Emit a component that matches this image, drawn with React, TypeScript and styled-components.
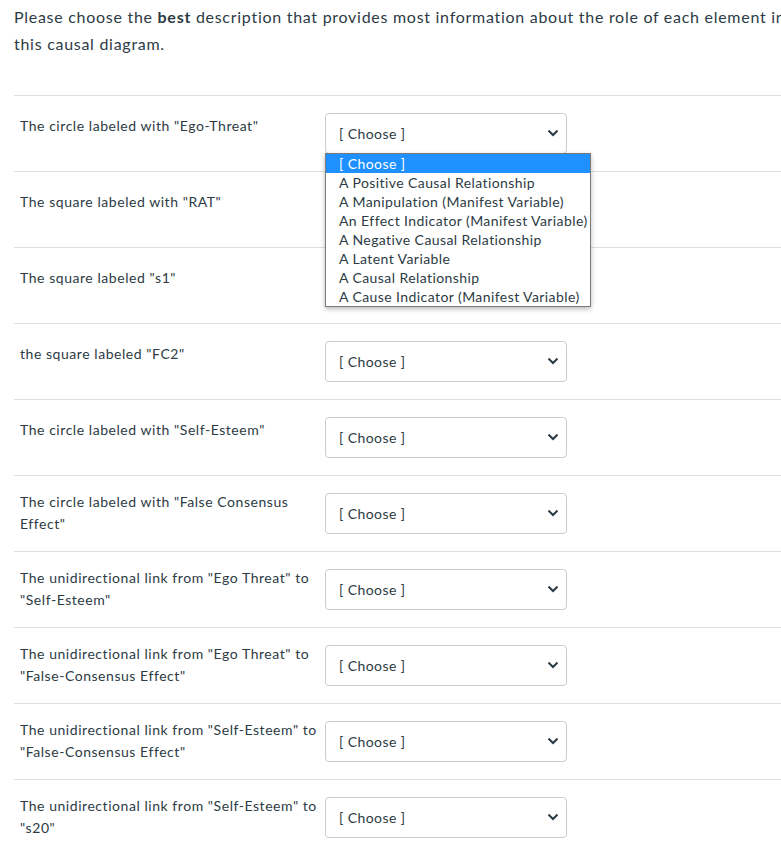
import React from "react";
import styled, { createGlobalStyle } from "styled-components";

const GlobalStyle = createGlobalStyle`
  html, body {
    margin: 0;
    padding: 0;
    background: #ffffff;
    overflow: hidden;
  }
  body {
    font-family: Lato, "Open Sans", "Liberation Sans", sans-serif;
    color: #2d3b45;
  }
`;

const Page = styled.div`
  width: 790px;
  padding-left: 14px;
`;

const Intro = styled.p`
  margin: 0 0 38px 0;
  padding-top: 3px;
  font-size: 16px;
  line-height: 27px;
  letter-spacing: 0.72px;
  color: #2d3b45;
`;

const List = styled.div`
  display: flex;
  flex-direction: column;
`;

const Row = styled.div`
  display: flex;
  align-items: flex-start;
  box-sizing: border-box;
  height: 76px;
  border-top: 1px solid #dcdedf;
`;

const Label = styled.div<{ $multi?: boolean }>`
  box-sizing: border-box;
  width: 311px;
  padding: ${(p) => (p.$multi ? "15px" : "19px")} 5px 0 6px;
  font-size: 14px;
  line-height: 22px;
  letter-spacing: 0.55px;
  color: #2d3b45;
`;

const SelectWrap = styled.div`
  position: relative;
  margin-top: 17px;
`;

const SelectBox = styled.div`
  box-sizing: border-box;
  width: 242px;
  height: 41px;
  display: flex;
  align-items: center;
  justify-content: space-between;
  padding: 0 8px 1px 13px;
  border: 1px solid #c7cdd1;
  border-radius: 4px;
  background: #ffffff;
  font-size: 14px;
  letter-spacing: 0.42px;
  color: #2d3b45;
`;

const Chevron = styled.svg`
  display: block;
  width: 10px;
  height: 7px;
`;

const Dropdown = styled.ul`
  position: absolute;
  top: 40px;
  left: 0;
  z-index: 2;
  margin: 0;
  padding: 0;
  list-style: none;
  box-sizing: border-box;
  width: 266px;
  background: #ffffff;
  border: 1px solid #7a7a7a;
  box-shadow: 0 2px 5px rgba(0, 0, 0, 0.28);
`;

const Option = styled.li<{ $active?: boolean }>`
  height: 19px;
  line-height: 19px;
  padding-left: 13px;
  font-size: 14px;
  letter-spacing: 0.42px;
  white-space: nowrap;
  background: ${(p) => (p.$active ? "#1e90ff" : "transparent")};
  color: ${(p) => (p.$active ? "#ffffff" : "#2d3b45")};
`;

const options = [
  "[ Choose ]",
  "A Positive Causal Relationship",
  "A Manipulation (Manifest Variable)",
  "An Effect Indicator (Manifest Variable)",
  "A Negative Causal Relationship",
  "A Latent Variable",
  "A Causal Relationship",
  "A Cause Indicator (Manifest Variable)",
];

const rows: { text: string; multi?: boolean; open?: boolean }[] = [
  { text: 'The circle labeled with "Ego-Threat"', open: true },
  { text: 'The square labeled with "RAT"' },
  { text: 'The square labeled "s1"' },
  { text: 'the square labeled "FC2"' },
  { text: 'The circle labeled with "Self-Esteem"' },
  { text: 'The circle labeled with "False Consensus Effect"', multi: true },
  { text: 'The unidirectional link from "Ego Threat" to "Self-Esteem"', multi: true },
  { text: 'The unidirectional link from "Ego Threat" to "False-Consensus Effect"', multi: true },
  { text: 'The unidirectional link from "Self-Esteem" to "False-Consensus Effect"', multi: true },
  { text: 'The unidirectional link from "Self-Esteem" to "s20"', multi: true },
];

function ChevronIcon() {
  return (
    <Chevron viewBox="0 0 10 7">
      <polyline
        points="1.2,1.3 5,5.1 8.8,1.3"
        fill="none"
        stroke="#2d3b45"
        strokeWidth="2.1"
        strokeLinecap="square"
      />
    </Chevron>
  );
}

export default function App() {
  return (
    <>
      <GlobalStyle />
      <Page>
        <Intro>
          Please choose the <strong>best</strong> description that provides most information
          about the role of each element in this causal diagram.
        </Intro>
        <List>
          {rows.map((r, i) => (
            <Row key={i}>
              <Label $multi={r.multi}>{r.text}</Label>
              <SelectWrap>
                <SelectBox>
                  <span>[ Choose ]</span>
                  <ChevronIcon />
                </SelectBox>
                {r.open && (
                  <Dropdown>
                    {options.map((o, j) => (
                      <Option key={j} $active={j === 0}>
                        {o}
                      </Option>
                    ))}
                  </Dropdown>
                )}
              </SelectWrap>
            </Row>
          ))}
        </List>
      </Page>
    </>
  );
}
